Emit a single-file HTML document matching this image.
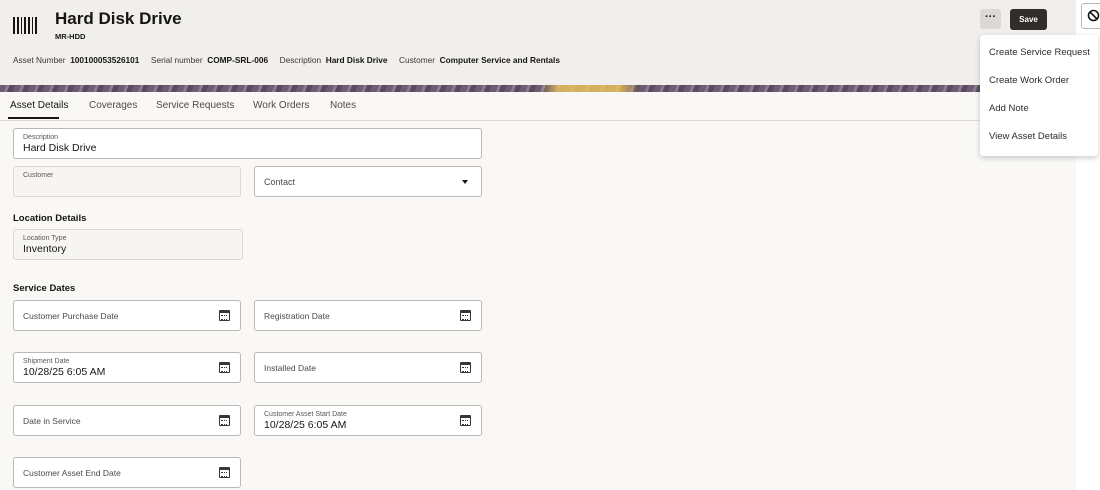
<!DOCTYPE html>
<html><head><meta charset="utf-8"><style>
*{box-sizing:border-box;margin:0;padding:0}
body{width:1100px;height:490px;overflow:hidden;font-family:"Liberation Sans",sans-serif;background:#fff;position:relative;color:#161513}
.main{position:absolute;left:0;top:0;width:1076px;height:490px;background:#f9f8f6}
.hdr{position:absolute;left:0;top:0;width:1076px;height:85px;background:#f1efed}
.banner{position:absolute;left:0;top:85px;width:1076px;height:7px;background:linear-gradient(90deg,rgba(0,0,0,0) 0 540px,rgba(240,200,90,.8) 560px 620px,rgba(0,0,0,0) 640px),repeating-linear-gradient(110deg,#6e5c72 0 6px,#8b7a8f 6px 9px,#5a4a60 9px 14px);}
.abs{position:absolute;white-space:nowrap}
.tabs{position:absolute;top:92px;left:0;width:1076px;height:29px;border-bottom:1px solid #dfdcd8;font-size:10px;color:#4f4a46}
.f{position:absolute;border:1px solid #bcb8b4;border-radius:3px;background:#fff;height:31px}
.f.ro{background:#f6f5f3;border-color:#dcd9d5}
.lbl{position:absolute;left:9px;top:5px;font-size:7px;color:#5c5752}
.val{position:absolute;left:9px;top:13px;font-size:10.5px;color:#161513}
.ph{position:absolute;left:9px;top:10px;font-size:8.5px;color:#4f4a46}
.cal{position:absolute;right:10px;top:9px;width:11px;height:11px;border:1.5px solid #3a3633;border-top-width:3px;border-radius:1px}
.cal:after{content:"";position:absolute;left:1px;top:2px;width:6px;height:3px;border-top:1px dotted #3a3633;border-bottom:1px dotted #3a3633}
.sec{position:absolute;left:13px;font-size:9.5px;font-weight:bold}
.menu{position:absolute;left:980px;top:35px;width:118px;height:121px;background:#fff;border-radius:3px;box-shadow:0 2px 6px rgba(0,0,0,.2);font-size:9.5px;color:#2f2c29}
.menu div{position:absolute;left:9px}
</style></head><body>
<div class="main"></div>
<div class="hdr"></div>
<div class="banner"></div>
<svg class="abs" style="left:13px;top:17px" width="25" height="17"><g fill="#161513"><rect x="0" y="0" width="2" height="17"/><rect x="4" y="0" width="2" height="17"/><rect x="8" y="0" width="1" height="17"/><rect x="11" y="0" width="2" height="17"/><rect x="15" y="0" width="2" height="17"/><rect x="19" y="0" width="1" height="17"/><rect x="22" y="0" width="2" height="17"/></g></svg>
<div class="abs" style="left:55px;top:9px;font-size:17px;font-weight:bold">Hard Disk Drive</div>
<div class="abs" style="left:55px;top:32px;font-size:7.5px;font-weight:bold">MR-HDD</div>
<div class="abs" style="left:13px;top:55px;font-size:8.3px;color:#3a3633">Asset Number&nbsp; <b style="color:#161513">100100053526101</b> &nbsp;&nbsp;&nbsp; Serial number&nbsp; <b style="color:#161513">COMP-SRL-006</b> &nbsp;&nbsp;&nbsp; Description&nbsp; <b style="color:#161513">Hard Disk Drive</b> &nbsp;&nbsp;&nbsp; Customer&nbsp; <b style="color:#161513">Computer Service and Rentals</b></div>
<div class="abs" style="left:980px;top:9px;width:21px;height:20px;background:#dcd9d5;border-radius:3px;text-align:center;font-size:11px;line-height:16px;font-weight:bold">···</div>
<div class="abs" style="left:1010px;top:9px;width:37px;height:21px;background:#312d2a;border-radius:3px;color:#fff;font-size:8px;font-weight:bold;text-align:center;line-height:21px">Save</div>
<div class="abs" style="left:1081px;top:3px;width:24px;height:26px;border:1px solid #bcb8b4;border-radius:3px;background:#fff"></div>
<svg class="abs" style="left:1087px;top:9px" width="13" height="13"><circle cx="6.5" cy="6.5" r="5" fill="none" stroke="#161513" stroke-width="1.6"/><line x1="3" y1="3" x2="10" y2="10" stroke="#161513" stroke-width="1.6"/></svg>
<div class="tabs">
<div class="abs" style="left:10px;top:8px;color:#161513">Asset Details</div>
<div class="abs" style="left:8px;top:25px;width:51px;height:2px;background:#161513"></div>
<div class="abs" style="left:89px;top:8px">Coverages</div>
<div class="abs" style="left:156px;top:8px">Service Requests</div>
<div class="abs" style="left:253px;top:8px">Work Orders</div>
<div class="abs" style="left:330px;top:8px">Notes</div>
</div>
<div class="f" style="left:13px;top:128px;width:469px"><div class="lbl">Description</div><div class="val">Hard Disk Drive</div></div>
<div class="f ro" style="left:13px;top:166px;width:228px"><div class="lbl">Customer</div></div>
<div class="f" style="left:254px;top:166px;width:228px"><div class="ph" style="font-size:9px">Contact</div><div class="abs" style="right:13px;top:13px;border:3.5px solid transparent;border-top:4px solid #161513;border-bottom:0"></div></div>
<div class="sec" style="top:213px">Location Details</div>
<div class="f ro" style="left:13px;top:229px;width:230px"><div class="lbl">Location Type</div><div class="val">Inventory</div></div>
<div class="sec" style="top:283px">Service Dates</div>
<div class="f" style="left:13px;top:300px;width:228px"><div class="ph">Customer Purchase Date</div><div class="cal"></div></div>
<div class="f" style="left:254px;top:300px;width:228px"><div class="ph">Registration Date</div><div class="cal"></div></div>
<div class="f" style="left:13px;top:352px;width:228px"><div class="lbl">Shipment Date</div><div class="val">10/28/25 6:05 AM</div><div class="cal"></div></div>
<div class="f" style="left:254px;top:352px;width:228px"><div class="ph">Installed Date</div><div class="cal"></div></div>
<div class="f" style="left:13px;top:405px;width:228px"><div class="ph">Date in Service</div><div class="cal"></div></div>
<div class="f" style="left:254px;top:405px;width:228px"><div class="lbl">Customer Asset Start Date</div><div class="val">10/28/25 6:05 AM</div><div class="cal"></div></div>
<div class="f" style="left:13px;top:457px;width:228px"><div class="ph">Customer Asset End Date</div><div class="cal"></div></div>
<div class="menu">
<div style="top:12px">Create Service Request</div>
<div style="top:40px">Create Work Order</div>
<div style="top:68px">Add Note</div>
<div style="top:96px">View Asset Details</div>
</div>
</body></html>
